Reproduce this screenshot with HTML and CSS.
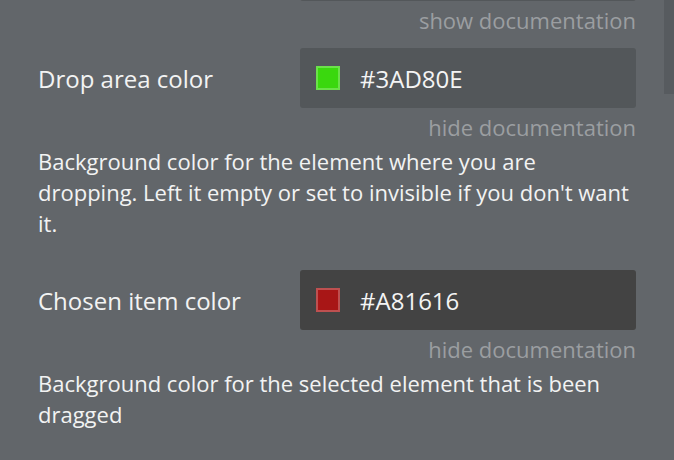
FILE: index.html
```html
<!DOCTYPE html>
<html lang="en">
<head>
    <meta charset="UTF-8">
    <meta name="viewport" content="width=device-width, initial-scale=1.0">
    <title>Drag settings</title>
    <link rel="stylesheet" href="styles.css">
</head>
<body>
    <div class="panel">
        <div class="settings">
            <div class="field">
                <div class="field-row">
                    <span class="field-label"></span>
                    <div class="color-input"></div>
                </div>
                <a class="doc-toggle">show documentation</a>
            </div>

            <div class="field">
                <div class="field-row">
                    <label class="field-label">Drop area color</label>
                    <div class="color-input">
                        <span class="swatch" style="background: #3AD80E;"></span>
                        <span class="color-value">#3AD80E</span>
                    </div>
                </div>
                <a class="doc-toggle">hide documentation</a>
                <p class="doc-text">Background color for the element where you are dropping. Left it empty or set to invisible if you don't want it.</p>
            </div>

            <div class="field">
                <div class="field-row">
                    <label class="field-label">Chosen item color</label>
                    <div class="color-input dark">
                        <span class="swatch" style="background: #A81616;"></span>
                        <span class="color-value">#A81616</span>
                    </div>
                </div>
                <a class="doc-toggle">hide documentation</a>
                <p class="doc-text">Background color for the selected element that is been dragged</p>
            </div>
        </div>
        <div class="scrollbar"></div>
    </div>
</body>
</html>
```

FILE: styles.css
```css
* {
    margin: 0;
    padding: 0;
    box-sizing: border-box;
}

body {
    font-family: 'Open Sans', 'Noto Sans', sans-serif;
    background: #62666a;
    color: #f2f3f3;
    overflow: hidden;
    height: 460px;
}

.panel {
    position: relative;
    height: 100%;
}

.settings {
    width: 636px;
    padding-left: 38px;
    margin-top: -59px;
}

.field {
    display: flex;
    flex-direction: column;
    margin-bottom: 14px;
}

.field-row {
    display: flex;
    align-items: center;
    justify-content: space-between;
    height: 60px;
}

.field-label {
    font-size: 24px;
}

.color-input {
    width: 336px;
    height: 60px;
    background: #53575a;
    border-radius: 3px;
    display: flex;
    align-items: center;
    padding-left: 16px;
    gap: 20px;
}

.color-input.dark {
    background: #434343;
}

.swatch {
    width: 24px;
    height: 24px;
    border: 2px solid rgba(255, 255, 255, 0.25);
    background-clip: padding-box;
}

.color-value {
    font-size: 24px;
    color: #f4f4f4;
}

.doc-toggle {
    align-self: flex-end;
    font-size: 22px;
    line-height: 28px;
    color: #9b9ea1;
    margin-top: 5px;
    cursor: pointer;
}

.doc-text {
    font-size: 22px;
    line-height: 31px;
    margin-top: 5px;
    padding-bottom: 17px;
}

.scrollbar {
    position: absolute;
    top: 0;
    right: 0;
    width: 10px;
    height: 153px;
    background: #575b5f;
}
```
